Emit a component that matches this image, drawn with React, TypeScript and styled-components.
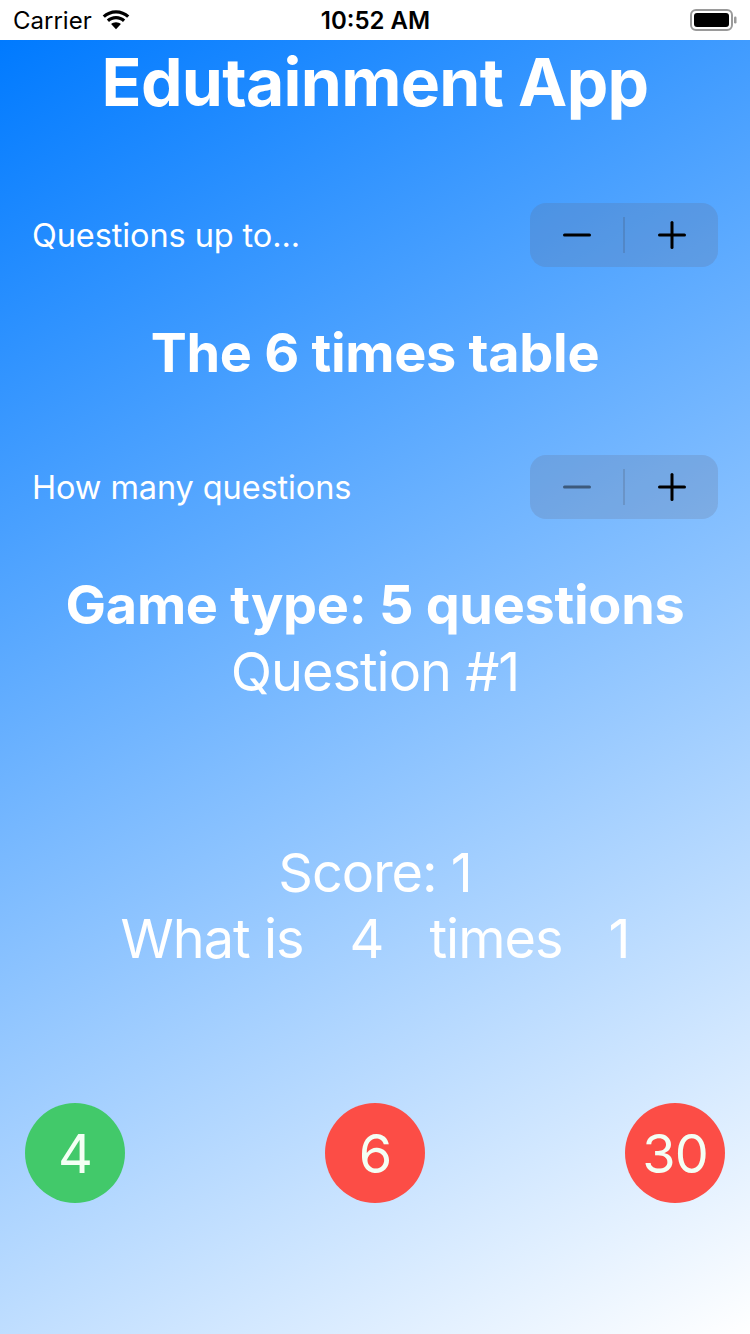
import React from "react";
import styled, { createGlobalStyle } from "styled-components";

const GlobalStyle = createGlobalStyle`
  html, body { margin: 0; padding: 0; }
  body { font-family: Inter, "Noto Sans", sans-serif; -webkit-font-smoothing: antialiased; }
  * { box-sizing: border-box; }
`;

const Screen = styled.div`
  width: 750px;
  height: 1334px;
  display: flex;
  flex-direction: column;
  overflow: hidden;
`;

const StatusBar = styled.div`
  height: 40px;
  background: #ffffff;
  display: grid;
  grid-template-columns: 1fr auto 1fr;
  align-items: center;
  padding: 0 12px 0 13px;
  color: #000;
`;

const StatusLeft = styled.div`
  display: flex;
  align-items: center;
  gap: 9px;
  font-size: 24px;
`;

const StatusTime = styled.div`
  font-size: 24px;
  font-weight: 600;
`;

const StatusRight = styled.div`
  display: flex;
  justify-content: flex-end;
  align-items: center;
`;

const Main = styled.main`
  flex: 1;
  background: linear-gradient(149.9deg, #007aff 0%, #ffffff 100%);
  display: flex;
  flex-direction: column;
  color: #fff;
`;

const Title = styled.h1`
  margin: 2px 0 0;
  font-size: 66px;
  line-height: 80px;
  font-weight: 700;
  text-align: center;
  letter-spacing: -0.7px;
`;

const Row = styled.div<{ $top: number }>`
  margin-top: ${(p) => p.$top}px;
  height: 64px;
  padding: 0 32px;
  display: flex;
  align-items: center;
  justify-content: space-between;
`;

const RowLabel = styled.span`
  font-size: 32.5px;
  font-weight: 400;
  letter-spacing: -0.1px;
`;

const Stepper = styled.div`
  width: 188px;
  height: 64px;
  border-radius: 16px;
  background: rgba(100, 100, 120, 0.2);
  display: flex;
  align-items: center;
`;

const StepHalf = styled.button<{ $disabled?: boolean }>`
  flex: 1;
  height: 100%;
  border: none;
  background: transparent;
  padding: 0;
  display: flex;
  align-items: center;
  justify-content: center;
  color: #000;
  opacity: ${(p) => (p.$disabled ? 0.45 : 1)};
`;

const StepDivider = styled.div`
  width: 2px;
  height: 36px;
  background: rgba(60, 60, 67, 0.18);
`;

const Heading = styled.div<{ $top: number; $bold?: boolean; $lh?: number }>`
  margin-top: ${(p) => p.$top}px;
  font-size: 54px;
  line-height: ${(p) => p.$lh ?? 68}px;
  font-weight: ${(p) => (p.$bold ? 700 : 400)};
  letter-spacing: ${(p) => (p.$bold ? "-0.3px" : "-1px")};
  text-align: center;
`;

const QuestionLine = styled.div`
  display: flex;
  justify-content: center;
  gap: 46px;
  font-size: 54px;
  line-height: 66px;
  font-weight: 400;
  letter-spacing: -1px;
`;

const Answers = styled.div`
  margin-top: 131px;
  padding: 0 25px;
  display: flex;
  justify-content: space-between;
`;

const AnswerButton = styled.button<{ $correct?: boolean }>`
  width: 100px;
  height: 100px;
  border-radius: 50%;
  border: none;
  padding: 0;
  background: ${(p) => (p.$correct ? "#42c96a" : "#fc4d46")};
  color: #f4fff4;
  font-family: Inter, sans-serif;
  font-size: 54px;
  font-weight: 400;
  letter-spacing: -1px;
  display: flex;
  align-items: center;
  justify-content: center;
`;

const Minus = () => (
  <svg width="30" height="4" viewBox="0 0 30 4">
    <rect x="1" y="0.5" width="28" height="3" rx="1.5" fill="currentColor" />
  </svg>
);

const Plus = () => (
  <svg width="30" height="30" viewBox="0 0 30 30">
    <rect x="1" y="13.5" width="28" height="3" rx="1.5" fill="currentColor" />
    <rect x="13.5" y="1" width="3" height="28" rx="1.5" fill="currentColor" />
  </svg>
);

const Wifi = () => (
  <svg width="30" height="22" viewBox="0 0 30 22">
    <path d="M15 4.5c4.3 0 8.2 1.6 11.1 4.3l2.2-2.3C24.8 3.2 20.1 1.2 15 1.2S5.2 3.2 1.7 6.5l2.2 2.3C6.8 6.1 10.7 4.5 15 4.5z" fill="#000" />
    <path d="M15 10.3c2.7 0 5.1 1 7 2.6l2.2-2.3C21.7 8.4 18.5 7.1 15 7.1s-6.7 1.3-9.2 3.5L8 12.9c1.9-1.6 4.3-2.6 7-2.6z" fill="#000" />
    <path d="M15 13.2c-1.9 0-3.6.7-4.9 1.8L15 20.2l4.9-5.2c-1.3-1.1-3-1.8-4.9-1.8z" fill="#000" />
  </svg>
);

const Battery = () => (
  <svg width="48" height="22" viewBox="0 0 48 22">
    <rect x="1" y="1" width="41" height="20" rx="5" fill="none" stroke="#9a9a9a" strokeWidth="2" />
    <rect x="4" y="4" width="35" height="14" rx="3" fill="#000" />
    <rect x="44" y="7.5" width="2.5" height="7" rx="1.2" fill="#9a9a9a" />
  </svg>
);

export default function App() {
  return (
    <>
      <GlobalStyle />
      <Screen>
        <StatusBar>
          <StatusLeft>
            <span>Carrier</span>
            <Wifi />
          </StatusLeft>
          <StatusTime>10:52 AM</StatusTime>
          <StatusRight>
            <Battery />
          </StatusRight>
        </StatusBar>
        <Main>
          <Title>Edutainment App</Title>
          <Row $top={81}>
            <RowLabel>Questions up to...</RowLabel>
            <Stepper>
              <StepHalf aria-label="decrement"><Minus /></StepHalf>
              <StepDivider />
              <StepHalf aria-label="increment"><Plus /></StepHalf>
            </Stepper>
          </Row>
          <Heading $top={52} $bold>The 6 times table</Heading>
          <Row $top={68}>
            <RowLabel>How many questions</RowLabel>
            <Stepper>
              <StepHalf aria-label="decrement" $disabled><Minus /></StepHalf>
              <StepDivider />
              <StepHalf aria-label="increment"><Plus /></StepHalf>
            </Stepper>
          </Row>
          <Heading $top={52} $bold $lh={67}>Game type: 5 questions</Heading>
          <Heading $top={0} $lh={67}>Question #1</Heading>
          <Heading $top={135} $lh={66}>Score: 1</Heading>
          <QuestionLine>
            <span>What is</span>
            <span>4</span>
            <span>times</span>
            <span>1</span>
          </QuestionLine>
          <Answers>
            <AnswerButton $correct>4</AnswerButton>
            <AnswerButton>6</AnswerButton>
            <AnswerButton>30</AnswerButton>
          </Answers>
        </Main>
      </Screen>
    </>
  );
}
